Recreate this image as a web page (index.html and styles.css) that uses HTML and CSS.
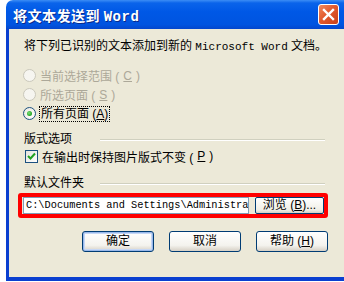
FILE: index.html
```html
<!DOCTYPE html>
<html lang="zh-CN">
<head>
	<meta charset="UTF-8">
	<title>将文本发送到 Word</title>
	<link rel="stylesheet" href="styles.css">
</head>
<body>
	<div class="window">
		<div class="titlebar">
			<span class="title">将文本发送到 <span class="mono">Word</span></span>
			<span class="close">
				<svg width="13" height="13" viewBox="0 0 13 13"><path d="M2 2 L11 11 M11 2 L2 11" stroke="#fff" stroke-width="2.4" stroke-linecap="square"/></svg>
			</span>
		</div>
		<div class="content">
			<p class="intro">将下列已识别的文本添加到新的 <span class="mono">Microsoft Word</span> 文档。</p>

			<div class="radios">
				<div class="radio disabled"><span class="dot"></span>当前选择范围 (<u>C</u>)</div>
				<div class="radio disabled"><span class="dot"></span>所选页面 (<u>S</u>)</div>
				<div class="radio checked"><span class="dot"></span><span class="focus">所有页面 (<u>A</u>)</span></div>
			</div>

			<div class="group"><span class="label">版式选项</span><span class="rule"></span></div>
			<div class="check">
				<span class="box"><svg width="11" height="11" viewBox="0 0 11 11"><path d="M2 5 L4.5 7.5 L9 2.5" fill="none" stroke="#21a121" stroke-width="2"/></svg></span>
				在输出时保持图片版式不变 (<u>P</u>)
			</div>

			<div class="group second"><span class="label">默认文件夹</span><span class="rule"></span></div>
			<div class="folder">
				<div class="path mono">C:\Documents and Settings\Administra</div>
				<div class="browse">浏览 (<u>B</u>)...</div>
			</div>

			<div class="buttons">
				<div class="btn default">确定</div>
				<div class="btn">取消</div>
				<div class="btn">帮助 (<u>H</u>)</div>
			</div>
		</div>
	</div>
</body>
</html>
```
FILE: styles.css
```css
* {
    margin: 0;
    padding: 0;
    box-sizing: border-box;
}

body {
    background: #fff;
    overflow: hidden;
    font-family: "Liberation Sans", "Noto Sans CJK SC", sans-serif;
    font-size: 12px;
    color: #000;
}

.mono {
    font-family: "Liberation Mono", "DejaVu Sans Mono", monospace;
}

.window {
    margin-left: 6px;
    width: 345px;
    height: 281px;
    display: flex;
    flex-direction: column;
}

.titlebar {
    height: 29px;
    border-radius: 7px 7px 0 0;
    background: linear-gradient(#3c8df5 0, #0a64ea 3px, #0058e6 40%, #0054e0 85%, #0446cc 100%);
    display: flex;
    align-items: center;
    justify-content: space-between;
    padding-left: 7px;
    padding-right: 12px;
}

.title {
    color: #fff;
    font-family: "Noto Sans CJK SC", sans-serif;
    font-size: 14px;
    font-weight: bold;
    letter-spacing: 0.5px;
    text-shadow: 1px 1px 0 #0a2a8a;
}

.title .mono {
    font-size: 14px;
}

.close {
    width: 21px;
    height: 21px;
    border: 1px solid #fff;
    border-radius: 3px;
    background: linear-gradient(135deg, #f08a5e 0, #e25a2e 45%, #c8401a 100%);
    display: flex;
    align-items: center;
    justify-content: center;
}

.content {
    flex: 1;
    background: #ece9d8;
    border-left: 3px solid #0a3fd0;
    border-bottom: 4px solid #0a3fd0;
    padding-top: 9px;
}

.intro {
    line-height: 16px;
    padding-left: 15px;
    white-space: nowrap;
}

.intro .mono {
    font-size: 11px;
}

.radios {
    margin-top: 11px;
    padding-left: 14px;
}

.radio {
    height: 19px;
    display: flex;
    align-items: center;
    gap: 4px;
}

.radio .dot {
    width: 13px;
    height: 13px;
    border-radius: 50%;
    border: 1px solid #1c5180;
    background: radial-gradient(circle at 65% 65%, #fff 0, #e8e6dc 100%);
    position: relative;
}

.radio.disabled {
    color: #aca899;
}

.radio.disabled .dot {
    border-color: #cac8bb;
    background: #f6f5f0;
}

.radio.checked .dot::after {
    content: "";
    position: absolute;
    left: 3px;
    top: 3px;
    width: 5px;
    height: 5px;
    border-radius: 50%;
    background: radial-gradient(circle at 40% 40%, #7be17b 0, #21a121 70%);
}

.focus {
    outline: 1px dotted #000;
    padding: 0 1px;
    line-height: 14px;
}

.group {
    margin-top: 6px;
    height: 16px;
    display: flex;
    align-items: center;
    padding-left: 15px;
}

.group .label {
    width: 76px;
    flex-shrink: 0;
}

.group .rule {
    width: 225px;
    height: 2px;
    margin-top: 5px;
    border-top: 1px solid #d0d0bf;
    border-bottom: 1px solid #fff;
}

.check {
    margin-top: 3px;
    height: 16px;
    display: flex;
    align-items: center;
    gap: 4px;
    padding-left: 16px;
}

.check .box {
    width: 13px;
    height: 13px;
    border: 1px solid #1c5180;
    background: linear-gradient(135deg, #e4e3dc, #fff);
    display: flex;
    align-items: center;
    justify-content: center;
}

.group.second {
    margin-top: 9px;
}

.folder {
    margin: 4px 0 0 9px;
    width: 310px;
    height: 25px;
    border: 4px solid #f00;
    border-radius: 3px;
    display: flex;
    align-items: center;
    padding-left: 1px;
    gap: 6px;
}

.path {
    width: 226px;
    height: 17px;
    background: #fff;
    border: 1px solid #7f9db9;
    font-size: 10.3px;
    line-height: 15px;
    padding-left: 2px;
    white-space: nowrap;
    overflow: hidden;
}

.browse {
    width: 69px;
    height: 17px;
    border: 1px solid #003c74;
    border-radius: 2px;
    background: linear-gradient(#fff, #f0efe6 80%, #d6d0c5);
    text-align: center;
    line-height: 15px;
}

.buttons {
    margin: 13px 0 0 73px;
    display: flex;
    gap: 15px;
}

.btn {
    width: 72px;
    height: 21px;
    border: 1px solid #003c74;
    border-radius: 3px;
    background: linear-gradient(#fff, #f4f3ee 70%, #d6d0c5);
    text-align: center;
    line-height: 19px;
}

.btn.default {
    box-shadow: inset 0 0 0 1px #98b8ea, inset 0 0 0 2px #c6d7f5;
}
```
